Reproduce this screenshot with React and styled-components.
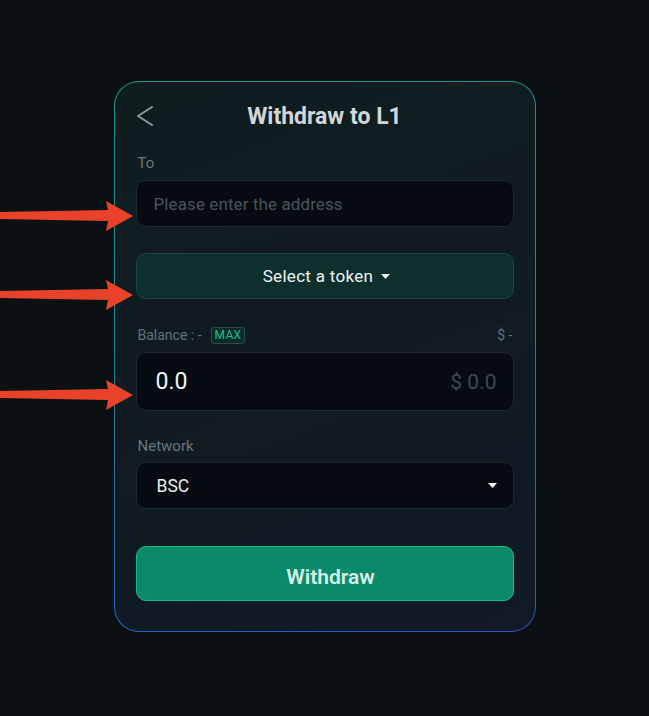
import React from "react";
import styled, { createGlobalStyle } from "styled-components";

const Global = createGlobalStyle`
  html, body { margin: 0; padding: 0; background: #0b1113; }
  * { box-sizing: border-box; }
`;

const Page = styled.div`
  position: relative;
  width: 649px;
  height: 716px;
  background: #0b1113;
  display: flex;
  justify-content: center;
  align-items: flex-start;
  padding-top: 81px;
  font-family: Roboto, "Liberation Sans", sans-serif;
  overflow: hidden;
`;

const Card = styled.div`
  width: 422px;
  border: 1px solid transparent;
  border-radius: 25px;
  background:
    linear-gradient(160deg, #0f1d1f 0%, #101b22 55%, #111a27 100%) padding-box,
    linear-gradient(170deg, #1a9c8a 0%, #1d8396 45%, #2a60c2 90%, #2f54c8 100%) border-box;
  padding: 18px 21px 30px;
  display: flex;
  flex-direction: column;
`;

const Header = styled.div`
  position: relative;
  height: 32px;
  display: flex;
  align-items: center;
  justify-content: center;
`;

const BackButton = styled.button`
  position: absolute;
  left: 0;
  top: 4px;
  width: 20px;
  height: 24px;
  padding: 0;
  border: none;
  background: none;
  display: flex;
  align-items: center;
`;

const Title = styled.h1`
  margin: 0;
  font-size: 23px;
  font-weight: 700;
  color: #d2d6d8;
`;

const Label = styled.div`
  margin-top: ${(p) => p.$mt}px;
  padding-left: 2px;
  font-size: 15px;
  line-height: 16px;
  color: #66767e;
`;

const Field = styled.div`
  margin-top: ${(p) => p.$mt}px;
  height: ${(p) => p.$h}px;
  border-radius: 10px;
  border: 1px solid #1d282f;
  background: #050b10;
  display: flex;
  align-items: center;
  justify-content: space-between;
  padding: 0 ${(p) => p.$pr || 17}px 0 ${(p) => p.$pl || 17}px;
`;

const Placeholder = styled.span`
  font-size: 17px;
  color: #48555d;
  letter-spacing: 0.1px;
  padding-top: 1px;
`;

const TokenButton = styled.button`
  margin-top: 26px;
  height: 46px;
  width: 100%;
  border-radius: 10px;
  border: 1px solid #1e453f;
  background: #0e302d;
  display: flex;
  align-items: center;
  justify-content: center;
  gap: 8px;
  padding: 0 0 0 4px;
  font-family: inherit;
  font-size: 17px;
  letter-spacing: 0.3px;
  color: #eef2f2;
  cursor: pointer;
`;

const BalanceRow = styled.div`
  margin-top: 28px;
  height: 16px;
  display: flex;
  align-items: center;
  justify-content: space-between;
  padding: 0 1px 0 2px;
  font-size: 14px;
  color: #5f717a;
`;

const BalanceLeft = styled.div`
  display: flex;
  align-items: center;
  gap: 9px;
`;

const MaxBadge = styled.span`
  font-size: 12px;
  line-height: 13px;
  padding: 1px 3px;
  border: 1px solid #294c46;
  border-radius: 3px;
  background: #0d2a28;
  color: #17c28f;
  letter-spacing: 0.3px;
`;

const Amount = styled.span`
  font-size: 23px;
  color: #f2f4f5;
`;

const AmountUsd = styled.span`
  font-size: 21px;
  color: #3c4a52;
`;

const SelectText = styled.span`
  font-size: 17.5px;
  color: #e9eded;
`;

const WithdrawButton = styled.button`
  margin-top: 37px;
  height: 55px;
  width: 100%;
  border-radius: 10px;
  border: 1px solid #1cb88b;
  background: #0a8a6b;
  padding: 6px 0 0 12px;
  font-family: inherit;
  font-size: 21px;
  font-weight: 600;
  color: #d6efe6;
  cursor: pointer;
`;

const ArrowLayer = styled.svg`
  position: absolute;
  left: 0;
  top: 0;
  pointer-events: none;
`;

const Caret = ({ color = "#f2f4f4" }) => (
  <svg width="9" height="5" viewBox="0 0 9 5">
    <path d="M0 0 H9 L4.5 5 Z" fill={color} />
  </svg>
);

const arrowPoints = (ty) =>
  [
    [0, ty - 4],
    [108, ty - 6],
    [106, ty - 15],
    [133, ty],
    [106, ty + 15],
    [108, ty + 5],
    [0, ty + 3],
  ]
    .map((p) => p.join(","))
    .join(" ");

export default function App() {
  return (
    <Page>
      <Global />
      <Card>
        <Header>
          <BackButton aria-label="back">
            <svg width="18" height="22" viewBox="0 0 18 22">
              <polyline
                points="16,2 2,11 16,20"
                fill="none"
                stroke="#8b979b"
                strokeWidth="2"
                strokeLinecap="round"
                strokeLinejoin="round"
              />
            </svg>
          </BackButton>
          <Title>Withdraw to L1</Title>
        </Header>

        <Label $mt={23}>To</Label>
        <Field $mt={9} $h={47}>
          <Placeholder>Please enter the address</Placeholder>
        </Field>

        <TokenButton>
          Select a token <Caret />
        </TokenButton>

        <BalanceRow>
          <BalanceLeft>
            <span>Balance : -</span>
            <MaxBadge>MAX</MaxBadge>
          </BalanceLeft>
          <span>$ -</span>
        </BalanceRow>

        <Field $mt={9} $h={59} $pl={19} $pr={16}>
          <Amount>0.0</Amount>
          <AmountUsd>$ 0.0</AmountUsd>
        </Field>

        <Label $mt={27}>Network</Label>
        <Field $mt={8} $h={47} $pl={20} $pr={16}>
          <SelectText>BSC</SelectText>
          <Caret />
        </Field>

        <WithdrawButton>Withdraw</WithdrawButton>
      </Card>

      <ArrowLayer width="140" height="716" viewBox="0 0 140 716">
        <polygon points={arrowPoints(216)} fill="#e8432a" />
        <polygon points={arrowPoints(295)} fill="#e8432a" />
        <polygon points={arrowPoints(395)} fill="#e8432a" />
      </ArrowLayer>
    </Page>
  );
}
